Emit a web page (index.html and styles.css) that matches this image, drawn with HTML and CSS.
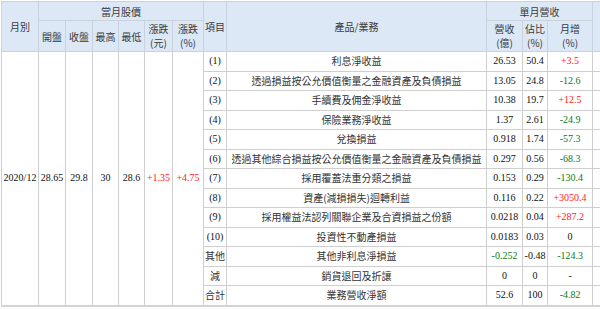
FILE: index.html
```html
<!DOCTYPE html>
<html lang="zh-Hant">
<head>
<meta charset="utf-8">
<title>月營收</title>
<link rel="stylesheet" href="styles.css">
</head>
<body>
<div class="wrap">
<table class="rev">
  <colgroup>
    <col class="c-month">
    <col class="c-open">
    <col class="c-close">
    <col class="c-high">
    <col class="c-low">
    <col class="c-chg">
    <col class="c-pct">
    <col class="c-item">
    <col class="c-name">
    <col class="c-rev">
    <col class="c-share">
    <col class="c-mom">
    <col class="c-extra">
  </colgroup>
  <thead>
    <tr class="h1">
      <th rowspan="2">月別</th>
      <th colspan="6">當月股價</th>
      <th rowspan="2">項目</th>
      <th rowspan="2">產品/業務</th>
      <th colspan="3">單月營收</th>
      <th rowspan="2"></th>
    </tr>
    <tr class="h2">
      <th>開盤</th>
      <th>收盤</th>
      <th>最高</th>
      <th>最低</th>
      <th><span class="ln">漲跌</span><span class="ln">(元)</span></th>
      <th><span class="ln">漲跌</span><span class="ln">(%)</span></th>
      <th><span class="ln">營收</span><span class="ln">(億)</span></th>
      <th><span class="ln">佔比</span><span class="ln">(%)</span></th>
      <th><span class="ln">月增</span><span class="ln">(%)</span></th>
    </tr>
  </thead>
  <tbody>
    <tr>
      <td rowspan="13" class="num">2020/12</td>
      <td rowspan="13" class="num">28.65</td>
      <td rowspan="13" class="num">29.8</td>
      <td rowspan="13" class="num">30</td>
      <td rowspan="13" class="num">28.6</td>
      <td rowspan="13" class="num up">+1.35</td>
      <td rowspan="13" class="num up">+4.75</td>
      <td class="num">(1)</td>
      <td class="name">利息淨收益</td>
      <td class="num">26.53</td>
      <td class="num">50.4</td>
      <td class="num up">+3.5</td>
      <td></td>
    </tr>
    <tr>
      <td class="num">(2)</td>
      <td class="name">透過損益按公允價值衡量之金融資產及負債損益</td>
      <td class="num">13.05</td>
      <td class="num">24.8</td>
      <td class="num down">-12.6</td>
      <td></td>
    </tr>
    <tr>
      <td class="num">(3)</td>
      <td class="name">手續費及佣金淨收益</td>
      <td class="num">10.38</td>
      <td class="num">19.7</td>
      <td class="num up">+12.5</td>
      <td></td>
    </tr>
    <tr>
      <td class="num">(4)</td>
      <td class="name">保險業務淨收益</td>
      <td class="num">1.37</td>
      <td class="num">2.61</td>
      <td class="num down">-24.9</td>
      <td></td>
    </tr>
    <tr>
      <td class="num">(5)</td>
      <td class="name">兌換損益</td>
      <td class="num">0.918</td>
      <td class="num">1.74</td>
      <td class="num down">-57.3</td>
      <td></td>
    </tr>
    <tr>
      <td class="num">(6)</td>
      <td class="name">透過其他綜合損益按公允價值衡量之金融資產及負債損益</td>
      <td class="num">0.297</td>
      <td class="num">0.56</td>
      <td class="num down">-68.3</td>
      <td></td>
    </tr>
    <tr>
      <td class="num">(7)</td>
      <td class="name">採用覆蓋法重分類之損益</td>
      <td class="num">0.153</td>
      <td class="num">0.29</td>
      <td class="num down">-130.4</td>
      <td></td>
    </tr>
    <tr>
      <td class="num">(8)</td>
      <td class="name">資產(減損損失)迴轉利益</td>
      <td class="num">0.116</td>
      <td class="num">0.22</td>
      <td class="num up">+3050.4</td>
      <td></td>
    </tr>
    <tr>
      <td class="num">(9)</td>
      <td class="name">採用權益法認列關聯企業及合資損益之份額</td>
      <td class="num">0.0218</td>
      <td class="num">0.04</td>
      <td class="num up">+287.2</td>
      <td></td>
    </tr>
    <tr>
      <td class="num">(10)</td>
      <td class="name">投資性不動產損益</td>
      <td class="num">0.0183</td>
      <td class="num">0.03</td>
      <td class="num">0</td>
      <td></td>
    </tr>
    <tr>
      <td class="name">其他</td>
      <td class="name">其他非利息淨損益</td>
      <td class="num down">-0.252</td>
      <td class="num">-0.48</td>
      <td class="num down">-124.3</td>
      <td></td>
    </tr>
    <tr>
      <td class="name">減</td>
      <td class="name">銷貨退回及折讓</td>
      <td class="num">0</td>
      <td class="num">0</td>
      <td class="num">-</td>
      <td></td>
    </tr>
    <tr>
      <td class="name">合計</td>
      <td class="name">業務營收淨額</td>
      <td class="num">52.6</td>
      <td class="num">100</td>
      <td class="num down">-4.82</td>
      <td></td>
    </tr>
  </tbody>
</table>
</div>
</body>
</html>
```
FILE: styles.css
```css
html, body {
  margin: 0;
  padding: 0;
  background: #ffffff;
}
.wrap {
  width: 600px;
  height: 309px;
  overflow: hidden;
  padding: 1px 0 0 1px;
  box-sizing: border-box;
}
.rev {
  border-collapse: collapse;
  table-layout: fixed;
  width: 618px;
  border-bottom: 2px solid #d4d4d4;
}
.c-month { width: 37px; }
.c-open { width: 27px; }
.c-close { width: 27px; }
.c-high { width: 26px; }
.c-low { width: 26px; }
.c-chg { width: 28px; }
.c-pct { width: 31px; }
.c-item { width: 23px; }
.c-name { width: 260px; }
.c-rev { width: 36px; }
.c-share { width: 25px; }
.c-mom { width: 45px; }
.c-extra { width: 27px; }

.rev th, .rev td {
  border: 1px solid #cfcfcf;
  padding: 0;
  text-align: center;
  vertical-align: middle;
  white-space: nowrap;
  overflow: hidden;
}
.rev th {
  background: #dce8f5;
  color: #3a3a3a;
  font-family: "Noto Sans CJK TC", "Noto Sans", sans-serif;
  font-weight: normal;
  font-size: 10px;
  line-height: 13px;
  border-color: #c8d3de;
}
.ln {
  display: block;
  line-height: 14px;
}
.h1 th { height: 18px; }
.h2 th { height: 30px; }
.rev td {
  height: 18.5px;
  line-height: 12px;
  color: #111111;
}
.rev td.name {
  font-family: "Noto Sans CJK TC", "Noto Sans", sans-serif;
  font-size: 10px;
  color: #333333;
}
.rev td.num {
  font-family: "Liberation Serif", "Times New Roman", serif;
  font-size: 10px;
}
.rev td.up { color: #ff2020; }
.rev td.down { color: #0a7a1a; }
```
